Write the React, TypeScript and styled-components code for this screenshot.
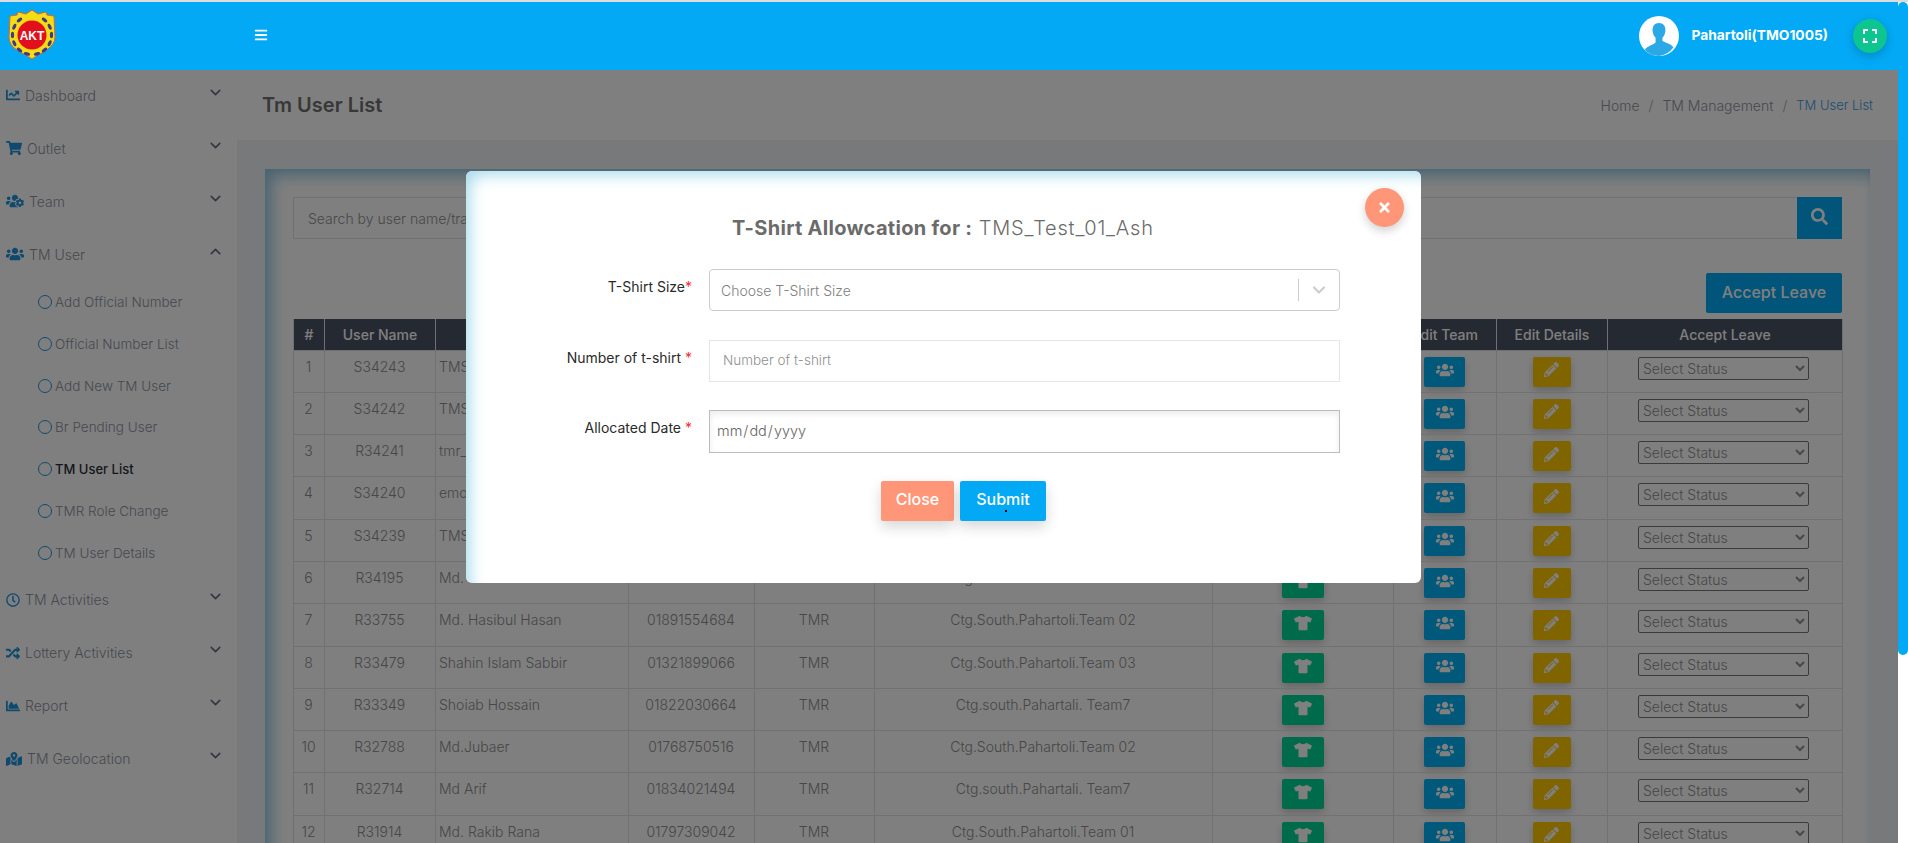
import React from 'react';
import styled, {createGlobalStyle} from 'styled-components';
import {ChevronDown, ChevronUp} from 'lucide-react';
import {
    FaBars, FaChartArea, FaChartLine, FaExpand, FaMapMarkedAlt, FaPencilAlt, FaRandom, FaRegClock,
    FaSearch, FaShoppingCart, FaTimes, FaTshirt, FaUsers, FaUsersCog
} from 'react-icons/fa';

const FONT = `Inter, "Noto Sans", sans-serif`;

const subMenu = ['Add Official Number', 'Official Number List', 'Add New TM User', 'Br Pending User', 'TM User List', 'TMR Role Change', 'TM User Details'];

const rows = [
    ['S34243', 'TMS_Test_01_Ash', '01700000001', 'TMS', 'Ctg.South.Pahartoli.Team 02'],
    ['S34242', 'TMS_Test_02', '01700000002', 'TMS', 'Ctg.South.Pahartoli.Team 02'],
    ['R34241', 'tmr_test_01', '01700000003', 'TMR', 'Ctg.South.Pahartoli.Team 01'],
    ['S34240', 'emon', '01700000004', 'TMS', 'Ctg.South.Pahartoli.Team 03'],
    ['S34239', 'TMS_Test', '01700000005', 'TMS', 'Ctg.South.Pahartoli.Team 01'],
    ['R34195', 'Md. Rahim', '01700000006', 'TMR', 'Ctg.South.Pahartoli.Team 02'],
    ['R33755', 'Md. Hasibul Hasan', '01891554684', 'TMR', 'Ctg.South.Pahartoli.Team 02'],
    ['R33479', 'Shahin Islam Sabbir', '01321899066', 'TMR', 'Ctg.South.Pahartoli.Team 03'],
    ['R33349', 'Shoiab Hossain', '01822030664', 'TMR', 'Ctg.south.Pahartali. Team7'],
    ['R32788', 'Md.Jubaer', '01768750516', 'TMR', 'Ctg.South.Pahartoli.Team 02'],
    ['R32714', 'Md Arif', '01834021494', 'TMR', 'Ctg.south.Pahartali. Team7'],
    ['R31914', 'Md. Rakib Rana', '01797309042', 'TMR', 'Ctg.South.Pahartoli.Team 01'],
];

const Logo = () => (
    <svg width="52" height="52" viewBox="0 0 52 52">
        <path d="M26 1l6 4 8-2 1 3 7 1 1 21c0 11-13 15-23 22C16 43 3 40 3 28L4 7l7-1 1-3 8 2z" fill="#f5dc14" stroke="#d9662a" strokeWidth="1"/>
        {[40, 65, 90, 115, 140, 165, 195, 220, 245, 270, 295, 320].map(a =>
            <ellipse key={a} cx="26" cy="6.500" rx="3.200" ry="1.600" fill="#3d3a8c" transform={`rotate(${a} 26 26)`}/>
        )}
        <circle cx="26" cy="26" r="14.5" fill="#e2101c"/>
        <text x="26" y="30.500" textAnchor="middle" fontFamily="Liberation Sans, sans-serif" fontWeight="700" fontSize="12" fill="#fff">AKT</text>
    </svg>
);

const Avatar = () => (
    <svg width="40" height="40" viewBox="0 0 40 40">
        <circle cx="20" cy="20" r="20" fill="#fff"/>
        <path d="M20 7c4.400 0 6.800 3.200 6.400 8-.3 3-1.500 5.200-3 6.800v3c2.500 2 8 2.500 11 6.500A20 20 0 0 1 20 40 20 20 0 0 1 5.600 33.800c3-4 8.500-4.800 11-7.300v-4.700c-1.500-1.600-2.700-3.800-3-6.800-.4-4.800 2-8 6.400-8z" fill="#2aa9e6"/>
    </svg>
);

const NavItem: React.FC<{icon: React.ReactNode; label: string; open?: boolean}> = ({icon, label, open}) => (
    <NavRow>
        <NavIcon>{icon}</NavIcon>
        <NavLabel>{label}</NavLabel>
        <NavChevron>{open ? <ChevronUp size={17} strokeWidth={2.4}/> : <ChevronDown size={17} strokeWidth={2.4}/>}</NavChevron>
    </NavRow>
);

export default function App() {
    return (
        <Window>
            <GlobalStyle/>
            <TopEdge/>
            <Viewport>
                <Page>
                    <Header>
                        <LogoBox><Logo/></LogoBox>
                        <MenuToggle><FaBars size={14}/></MenuToggle>
                        <UserBox>
                            <Avatar/>
                            <UserName>Pahartoli(TMO1005)</UserName>
                            <FullscreenButton><FaExpand size={16}/></FullscreenButton>
                        </UserBox>
                    </Header>
                    <Body>
                        <Sidebar>
                            <NavItem icon={<FaChartLine size={14}/>} label="Dashboard"/>
                            <NavItem icon={<FaShoppingCart size={16}/>} label="Outlet"/>
                            <NavItem icon={<FaUsersCog size={18}/>} label="Team"/>
                            <NavItem icon={<FaUsers size={18}/>} label="TM User" open/>
                            <SubList>
                                {subMenu.map(label =>
                                    <SubItem key={label} $active={label === 'TM User List'}>
                                        <SubRing/>
                                        {label}
                                    </SubItem>
                                )}
                            </SubList>
                            <NavItem icon={<FaRegClock size={14}/>} label="TM Activities"/>
                            <NavItem icon={<FaRandom size={14}/>} label="Lottery Activities"/>
                            <NavItem icon={<FaChartArea size={14}/>} label="Report"/>
                            <NavItem icon={<FaMapMarkedAlt size={16}/>} label="TM Geolocation"/>
                        </Sidebar>
                        <Main>
                            <TitleBar>
                                <PageTitle>Tm User List</PageTitle>
                                <Breadcrumb>
                                    <span>Home</span><Slash>/</Slash>
                                    <span>TM Management</span><Slash>/</Slash>
                                    <CrumbCurrent>TM User List</CrumbCurrent>
                                </Breadcrumb>
                            </TitleBar>
                            <Content>
                                <Card>
                                    <SearchRow>
                                        <SearchInput placeholder="Search by user name/trade name/mobile number"/>
                                        <SearchButton><FaSearch size={17}/></SearchButton>
                                    </SearchRow>
                                    <Actions>
                                        <AcceptButton>Accept Leave</AcceptButton>
                                    </Actions>
                                    <Table>
                                        <colgroup>
                                            <col width="31"/><col width="111"/><col width="193"/><col width="126"/><col width="120"/>
                                            <col width="338"/><col width="181"/><col width="103"/><col width="111"/><col width="235"/>
                                        </colgroup>
                                        <thead>
                                            <tr>
                                                {['#', 'User Name', 'Name', 'Mobile', 'Role', 'Team', 'T-Shirt', 'Edit Team', 'Edit Details', 'Accept Leave'].map(h =>
                                                    <Th key={h}>{h}</Th>
                                                )}
                                            </tr>
                                        </thead>
                                        <tbody>
                                            {rows.map((r, i) =>
                                                <tr key={r[0]}>
                                                    <Td>{i + 1}</Td>
                                                    <Td>{r[0]}</Td>
                                                    <Td $left>{r[1]}</Td>
                                                    <Td>{r[2]}</Td>
                                                    <Td>{r[3]}</Td>
                                                    <Td>{r[4]}</Td>
                                                    <Td><ActionButton $color="#00d694" $w={42}><FaTshirt size={18}/></ActionButton></Td>
                                                    <Td><ActionButton $color="#00b0f5" $w={41}><FaUsers size={18}/></ActionButton></Td>
                                                    <Td><ActionButton $color="#ffc800" $w={38}><FaPencilAlt size={15}/></ActionButton></Td>
                                                    <Td><StatusSelect defaultValue=""><option value="">Select Status</option><option>Accept</option></StatusSelect></Td>
                                                </tr>
                                            )}
                                        </tbody>
                                    </Table>
                                </Card>
                            </Content>
                        </Main>
                    </Body>
                    <Backdrop/>
                    <Modal>
                        <CloseCircle><FaTimes size={15}/></CloseCircle>
                        <ModalTitle><b>T-Shirt Allowcation for :</b> TMS_Test_01_Ash</ModalTitle>
                        <FormRow>
                            <FormLabel>T-Shirt Size<Req>*</Req></FormLabel>
                            <SelectBox>
                                <SelectText>Choose T-Shirt Size</SelectText>
                                <SelectDivider/>
                                <ChevronDown size={20} strokeWidth={2.6} color="#ccc"/>
                            </SelectBox>
                        </FormRow>
                        <FormRow $tight>
                            <FormLabel>Number of t-shirt <Req>*</Req></FormLabel>
                            <NumberInput placeholder="Number of t-shirt"/>
                        </FormRow>
                        <FormRow>
                            <FormLabel>Allocated Date <Req>*</Req></FormLabel>
                            <DateInput type="date"/>
                        </FormRow>
                        <ModalActions>
                            <ModalButton $color="#ff9678">Close</ModalButton>
                            <SubmitButton $color="#03a9f5">Submit</SubmitButton>
                        </ModalActions>
                    </Modal>
                </Page>
                <ScrollRail>
                    <ScrollThumb/>
                </ScrollRail>
            </Viewport>
        </Window>
    );
}

const GlobalStyle = createGlobalStyle`
  html, body {
    margin: 0;
    height: 100%;
    overflow: hidden;
    font-family: ${FONT};
  }
  #root {
    height: 100%;
  }
  * {
    box-sizing: border-box;
  }
`
const Window = styled.div`
  height: 100%;
  display: flex;
  flex-direction: column;
  background: #fff;
`
const TopEdge = styled.div`
  height: 2px;
  flex: none;
  background: #dcdcdc;
`
const Viewport = styled.div`
  flex: 1;
  min-height: 0;
  display: flex;
`
const ScrollRail = styled.div`
  width: 10px;
  flex: none;
  background: #fff;
`
const ScrollThumb = styled.div`
  height: 653px;
  border-radius: 5px;
  background: #03a9f5;
`
const Page = styled.div`
  position: relative;
  flex: 1;
  min-width: 0;
  overflow: hidden;
  display: flex;
  flex-direction: column;
`
const Header = styled.header`
  position: relative;
  z-index: 3;
  height: 68px;
  flex: none;
  display: flex;
  align-items: center;
  background: #03a9f5;
  color: #fff;
`
const LogoBox = styled.div`
  width: 247px;
  padding: 2px 0 4px 6px;
  display: flex;
`
const MenuToggle = styled.div`
  display: flex;
  margin-left: 7px;
  margin-top: -3px;
`
const UserBox = styled.div`
  margin-left: auto;
  display: flex;
  align-items: center;
  margin-right: 11px;
`
const UserName = styled.div`
  margin-left: 12px;
  margin-top: -2px;
  font-size: 13.8px;
  font-weight: 700;
`
const FullscreenButton = styled.div`
  width: 34px;
  height: 34px;
  margin-left: 25px;
  border-radius: 50%;
  display: flex;
  align-items: center;
  justify-content: center;
  background: #0cc58f;
  box-shadow: 0 3px 10px rgba(0, 0, 0, .2);
`
const Body = styled.div`
  flex: 1;
  display: flex;
  min-height: 0;
`
const Sidebar = styled.aside`
  width: 237px;
  flex: none;
  background: #fff;
  color: #9ba0ab;
`
const NavRow = styled.div`
  height: 50px;
  margin-bottom: 3px;
  display: flex;
  align-items: center;
  padding: 0 10px 0 6px;
`
const NavIcon = styled.span`
  display: flex;
  color: #1f93dc;
  margin-right: 5px;
`
const NavLabel = styled.span`
  font-size: 14px;
  font-weight: 300;
  color: #8e93a0;
`
const NavChevron = styled.span`
  margin-left: auto;
  margin-right: 3px;
  margin-top: -6px;
  display: flex;
  color: #6b7280;
`
const SubList = styled.div`
  margin-top: -1px;
  margin-bottom: 1px;
`
const SubItem = styled.div<{$active?: boolean}>`
  height: 41.85px;
  display: flex;
  align-items: center;
  gap: 3px;
  padding-left: 38px;
  font-size: ${p => p.$active ? '13px' : '13.5px'};
  color: ${p => p.$active ? '#2b2f38' : '#8e93a0'};
  font-weight: ${p => p.$active ? 500 : 300};
`
const SubRing = styled.span`
  width: 14px;
  height: 14px;
  border-radius: 50%;
  border: 1.8px solid #1f93dc;
  flex: none;
`
const Main = styled.main`
  flex: 1;
  min-width: 0;
  display: flex;
  flex-direction: column;
  background: #eef2f5;
`
const TitleBar = styled.div`
  height: 70px;
  flex: none;
  display: flex;
  align-items: center;
  justify-content: space-between;
  padding: 0 25px 0 25px;
  background: #fff;
`
const PageTitle = styled.h1`
  margin: 0;
  font-size: 20px;
  font-weight: 600;
  color: #707070;
`
const Breadcrumb = styled.div`
  display: flex;
  gap: 9px;
  font-size: 14px;
  font-weight: 300;
  color: #9090a0;
`
const Slash = styled.span`
  color: #a8a8a8;
`
const CrumbCurrent = styled.span`
  font-size: 13px;
  line-height: 17px;
  color: #3d9be0;
`
const Content = styled.div`
  padding: 29px 28px 0;
  flex: 1;
`
const Card = styled.div`
  height: 100%;
  padding: 28px;
  background: #fff;
  box-shadow: inset 12px 12px 16px -6px rgba(3, 130, 190, .45), inset -4px 0 10px -6px rgba(3, 130, 190, .3);
`
const SearchRow = styled.div`
  display: flex;
  height: 42px;
`
const SearchInput = styled.input`
  flex: 1;
  border: 1px solid #e3e3e3;
  border-right: 0;
  padding: 0 14px;
  font: 300 14px ${FONT};
  outline: none;

  &::placeholder {
    color: #909090;
  }
`
const SearchButton = styled.div`
  width: 45px;
  display: flex;
  align-items: center;
  justify-content: center;
  padding-bottom: 3px;
  background: #03a9f5;
  color: #fff;
`
const Actions = styled.div`
  display: flex;
  justify-content: flex-end;
  margin: 34px 0 6px;
`
const AcceptButton = styled.div`
  width: 136px;
  height: 40px;
  display: flex;
  align-items: center;
  justify-content: center;
  padding-bottom: 3px;
  border-radius: 2px;
  background: #03a9f5;
  color: #fff;
  font-size: 16px;
  font-weight: 500;
`
const Table = styled.table`
  width: 1549px;
  table-layout: fixed;
  border-collapse: collapse;
`
const Th = styled.th`
  height: 31px;
  padding: 0;
  background: #4a5265;
  border: 1px solid #dfe1e5;
  border-top: 0;
  color: #fff;
  font-size: 14px;
  font-weight: 500;
`
const Td = styled.td<{$left?: boolean}>`
  height: 42.3px;
  padding: 6px 1px 5px ${p => p.$left ? '3px' : '0'};
  border: 1px solid #e3e3e3;
  vertical-align: top;
  text-align: ${p => p.$left ? 'left' : 'center'};
  color: #8e8e8e;
  font-size: 14px;
  font-weight: 300;
  line-height: 20px;
`
const ActionButton = styled.div<{$color: string; $w: number}>`
  width: ${p => p.$w}px;
  height: 30px;
  margin: 0 auto;
  display: flex;
  align-items: center;
  justify-content: center;
  padding-bottom: 4px;
  border-radius: 2px;
  background: ${p => p.$color};
  color: #fff;
  box-shadow: 0 4px 8px rgba(0, 0, 0, .2);
`
const StatusSelect = styled.select`
  width: 171px;
  height: 23px;
  display: block;
  margin: 0 0 0 30px;
  padding: 0;
  border: 1px solid #767676;
  border-radius: 2px;
  background: #fff;
  color: #909090;
  font: 300 14px ${FONT};
`
const Backdrop = styled.div`
  position: absolute;
  inset: 0;
  z-index: 2;
  background: rgba(0, 0, 0, .5);
`
const Modal = styled.div`
  position: absolute;
  z-index: 4;
  top: 169px;
  left: 466px;
  width: 955px;
  height: 412px;
  padding: 0 81px 0 0;
  border-radius: 6px;
  background: #fff;
  box-shadow: inset 10px 10px 15px -6px #a9dcec;
`
const CloseCircle = styled.div`
  position: absolute;
  top: 17px;
  right: 17px;
  width: 39px;
  height: 39px;
  border-radius: 50%;
  display: flex;
  align-items: center;
  justify-content: center;
  background: #ff9678;
  color: #fff;
  box-shadow: 0 4px 10px rgba(0, 0, 0, .18);
`
const ModalTitle = styled.h2`
  margin: 0;
  padding: 45px 0 0 266px;
  height: 98px;
  font-size: 20px;
  font-weight: 300;
  line-height: 24px;
  letter-spacing: .8px;
  color: #6b6b6b;
  white-space: nowrap;

  b {
    font-weight: 700;
    letter-spacing: .3px;
  }
`
const FormRow = styled.div<{$tight?: boolean}>`
  display: flex;
  height: 42px;
  margin-bottom: ${p => p.$tight ? '28px' : '29px'};
`
const FormLabel = styled.label`
  width: 226px;
  padding-top: 9px;
  text-align: right;
  font-size: 14px;
  font-weight: 400;
  color: #2a2a2a;
`
const Req = styled.span`
  color: #ff2a3a;
`
const SelectBox = styled.div`
  flex: 1;
  margin-left: 17px;
  display: flex;
  align-items: center;
  padding: 0 10px 0 11px;
  border: 1px solid #ccc;
  border-radius: 4px;
`
const SelectText = styled.span`
  flex: 1;
  font-size: 14px;
  font-weight: 300;
  color: #808080;
`
const SelectDivider = styled.span`
  width: 1px;
  height: 22px;
  margin-right: 10px;
  background: #ccc;
`
const NumberInput = styled.input`
  flex: 1;
  margin-left: 17px;
  padding: 0 13px 2px;
  border: 1px solid #e6e6e6;
  outline: none;
  font: 300 13.5px ${FONT};

  &::placeholder {
    color: #909090;
  }
`
const DateInput = styled.input`
  flex: 1;
  margin-left: 17px;
  height: 43px;
  padding: 0 6px 3px;
  border: 1px solid #bdbdbd;
  outline: none;
  font: 300 14.5px ${FONT};
  color: #666;
  box-shadow: inset 0 3px 6px rgba(0, 0, 0, .08);

  &::-webkit-calendar-picker-indicator {
    display: none;
  }
`
const ModalActions = styled.div`
  display: flex;
  justify-content: flex-start;
  gap: 6px;
  padding-left: 415px;
`
const ModalButton = styled.div<{$color: string}>`
  width: 73px;
  height: 40px;
  display: flex;
  align-items: center;
  justify-content: center;
  padding-bottom: 4px;
  border-radius: 2px;
  background: ${p => p.$color};
  color: #fff;
  font-size: 16px;
  font-weight: 500;
  box-shadow: 0 6px 14px rgba(0, 0, 0, .16);
`
const SubmitButton = styled(ModalButton)`
  position: relative;
  width: 86px;

  &::after {
    content: "";
    position: absolute;
    left: 45px;
    top: 29px;
    width: 2px;
    height: 2px;
    background: #000;
  }
`
